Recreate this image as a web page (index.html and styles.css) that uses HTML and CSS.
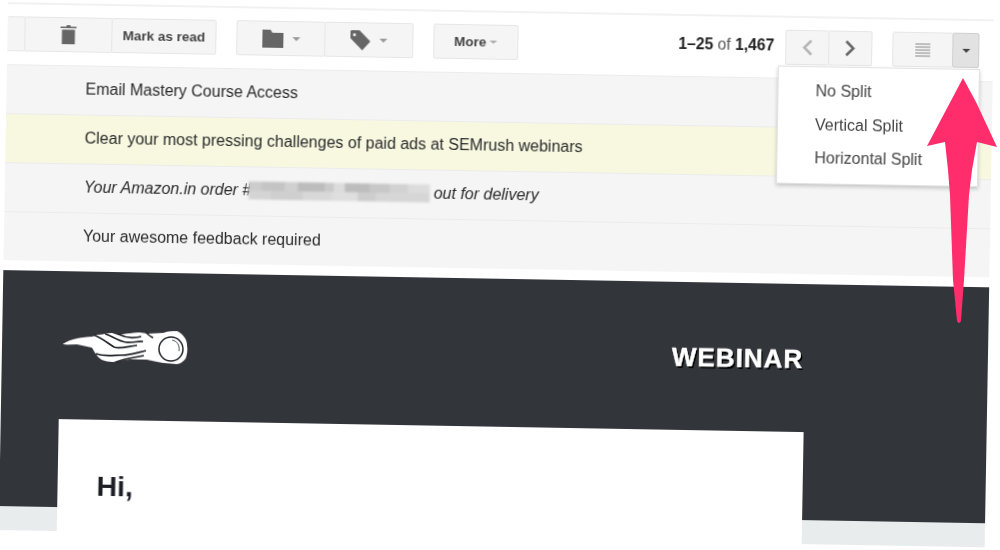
FILE: index.html
```html
<!DOCTYPE html>
<html lang="en">
<head>
<meta charset="utf-8">
<title>Inbox split view</title>
<link rel="stylesheet" href="styles.css">
</head>
<body>
<div class="stage">
  <div class="top-rule"></div>
  <div class="toolbar">
    <div class="group">
      <div class="btn btn-stub"></div>
      <div class="btn btn-trash">
        <svg class="icon" width="16" height="19" viewBox="0 0 16 19"><path d="M6 0h4v1.500h6V3H0V1.500h6z"/><path d="M1.500 4.500h13V19h-13z"/></svg>
      </div>
      <div class="btn btn-mark">Mark as read</div>
    </div>
    <div class="group">
      <div class="btn btn-drop">
        <svg class="icon" width="21" height="18" viewBox="0 0 21 18"><path d="M0 0h8l2 3h11v15H0z"/></svg>
        <span class="caret"></span>
      </div>
      <div class="btn btn-drop">
        <svg class="icon" width="20" height="20" viewBox="0 0 20 20"><path fill-rule="evenodd" d="M1 0h8l11 11-8 9L0 8V1.500A1.500 1.500 0 0 1 1 0zm3 3a1.500 1.500 0 1 0 0 3 1.500 1.500 0 0 0 0-3z"/></svg>
        <span class="caret"></span>
      </div>
    </div>
    <div class="btn btn-more">More<span class="caret caret-small"></span></div>
    <div class="count"><b>1–25</b> of <b>1,467</b></div>
    <div class="group">
      <div class="btn btn-page">
        <svg width="12" height="17" viewBox="0 0 12 17"><path class="chev-off" d="M10 1.500 3 8.500l7 7"/></svg>
      </div>
      <div class="btn btn-page">
        <svg width="12" height="17" viewBox="0 0 12 17"><path class="chev-on" d="m2 1.500 7 7-7 7"/></svg>
      </div>
    </div>
    <div class="group group-view">
      <div class="btn btn-list">
        <svg width="15" height="14" viewBox="0 0 15 14"><path class="list-lines" d="M0 1h15M0 4h15M0 7h15M0 10h15M0 13h15"/></svg>
      </div>
      <div class="btn btn-split"><span class="caret caret-dark"></span></div>
    </div>
  </div>

  <div class="menu">
    <div class="menu-item">No Split</div>
    <div class="menu-item">Vertical Split</div>
    <div class="menu-item">Horizontal Split</div>
  </div>

  <div class="rows">
    <div class="row">Email Mastery Course Access</div>
    <div class="row row-marked">Clear your most pressing challenges of paid ads at SEMrush webinars</div>
    <div class="row row-italic">Your Amazon.in order #<span class="mosaic"></span> out for delivery</div>
    <div class="row">Your awesome feedback required</div>
  </div>

  <div class="hero">
    <div class="hero-head">
      <svg class="logo" width="130" height="40" viewBox="60 328 130 40">
        <path class="logo-fill" d="M62.500 345C67 342 72 340 77 339C82 338 87 337 92 337L97 335C102 335 107 333 112 333L118 335C122 334 126 333 130 333C134 332 137 332 140 332L148 333C153 333 158 332 163 332C168 330 173 330 177 330C183 333 187 338 187 344C188 349 187 353 186 357C184 360 180 363 177 363C172 363 168 362 163 362C157 361 152 360 147 359C141 359 135 359 130 359C124 360 119 361 113 362C109 362 105 361 102 360C99 358 97 356 95 353L92 348C87 347 82 346 77 345C72 345 67 346 62.500 345z"/>
        <path class="logo-line" d="M93 335C102 338 107 343 114 347C120 349 128 346 137 345M105 334C112 336 118 341 126 342C132 343 138 340 143 341M118 334C126 338 134 338 141 336M145 331C148 334 150 336 153 337M96 354C106 357 114 355 122 355C130 355 138 352 146 350M116 362C126 358 136 357 144 355"/>
        <circle class="logo-ring" cx="171" cy="348" r="12"/>
        <path class="logo-shine" d="M172 339C177 340 180 344 179 350"/>
      </svg>
      <div class="hero-title">WEBINAR</div>
    </div>
    <div class="card"><div class="greeting">Hi,</div></div>
  </div>
</div>

<svg class="arrow" width="80" height="260" viewBox="920 70 80 260">
  <path d="M963 78 976 102 997 147 977 142 972 170 969 195 964 280 961 321Q959 325 957 321L953 280 950 195 948 170 945 142 927 146 945 112z"/>
</svg>
</body>
</html>
```

FILE: styles.css
```css
* { box-sizing: border-box; }

html, body {
  margin: 0;
  height: 100%;
  background: #fff;
  overflow: hidden;
}

body {
  position: relative;
  font-family: "Liberation Sans", Arial, sans-serif;
  color: #333;
}

.stage {
  position: relative;
  width: 994px;
  padding-left: 8px;
  transform: rotate(1deg);
  transform-origin: 0 0;
  filter: blur(0.3px);
}

.top-rule {
  height: 2px;
  margin-top: 2px;
  background: #f1f1f1;
}

.toolbar {
  display: flex;
  align-items: center;
  height: 60px;
  padding: 12px 14px 13px 0;
}

.group {
  display: flex;
  margin-right: 20px;
}

.btn {
  display: flex;
  align-items: center;
  justify-content: center;
  height: 35px;
  background: #f5f5f5;
  border: 1px solid #e6e6e6;
  border-radius: 2px;
  font-size: 13.500px;
  font-weight: 700;
  color: #444;
}

.group .btn + .btn { margin-left: -1px; }

.btn-stub { width: 18px; border-left: 0; }
.btn-trash { width: 88px; }
.btn-mark { width: 105px; }
.btn-drop { width: 89px; gap: 9px; }
.btn-more { width: 85px; }
.btn-page { width: 44px; }
.btn-list { width: 61px; }
.btn-split {
  width: 27px;
  background: #e2e2e2;
  border-color: #cfcfcf;
}

.icon { fill: #666; }

.caret {
  width: 0;
  height: 0;
  border-style: solid;
  border-width: 4px 4px 0;
  border-color: #999 transparent transparent;
}

.caret-small {
  margin-left: 3px;
  border-width: 3px 4px 0;
  border-color: #aaa transparent transparent;
}

.caret-dark { border-color: #444 transparent transparent; }

.chev-off, .chev-on {
  fill: none;
  stroke-width: 2.500;
}
.chev-off { stroke: #b5b5b5; }
.chev-on { stroke: #666; }

.list-lines {
  fill: none;
  stroke: #888;
  stroke-width: 1.200;
}

.count {
  margin-left: auto;
  margin-right: 11px;
  padding-bottom: 4px;
  font-size: 15.700px;
  color: #555;
}
.count b { color: #222; }

.group-view { margin-right: 0; }

.menu {
  position: absolute;
  left: 779px;
  top: 50px;
  z-index: 2;
  width: 202px;
  height: 118px;
  padding-top: 7px;
  background: #fff;
  border: 1px solid #e2e2e2;
  box-shadow: 0 2px 4px rgba(0, 0, 0, 0.2);
}

.menu-item {
  height: 33.500px;
  padding-left: 37px;
  font-size: 16px;
  line-height: 33px;
  color: #444;
}

.rows { height: 196px; }

.row {
  display: flex;
  align-items: center;
  height: 49px;
  padding-left: 79px;
  padding-bottom: 3px;
  background: #f5f5f5;
  border-top: 1px solid #ececec;
  font-size: 16px;
  color: #2a2a2a;
  white-space: pre;
}

.row-marked { background: #f8f8e1; }
.row-italic { font-style: italic; }

.mosaic {
  display: block;
  width: 181px;
  height: 18px;
  margin-left: -3px;
  background-image:
    linear-gradient(90deg, #ccc 0 7%, #c4c4c4 7% 20%, #d0d0d0 20% 27%, #bcbcbc 27% 42%, #cacaca 42% 47%, #dcdcdc 47% 53%, #bdbdbd 53% 67%, #c8c8c8 67% 78%, #d2d2d2 78% 88%, #dcdcdc 88% 100%),
    linear-gradient(90deg, #d4d4d4 0 12%, #cfcfcf 12% 30%, #d8d8d8 30% 46%, #dedede 46% 60%, #cdcdcd 60% 70%, #d6d6d6 70% 100%);
  background-size: 100% 50%;
  background-position: 0 0, 0 100%;
  background-repeat: no-repeat;
  filter: blur(0.8px);
}

.hero {
  height: 262px;
  margin-top: 10px;
  background-image: linear-gradient(#32353a 0 236px, #e8eced 236px 260px, #fff 260px);
}

.hero-head {
  display: flex;
  align-items: center;
  height: 148px;
  padding-left: 58px;
}

.logo { margin-top: 4px; }
.logo-fill { fill: #fff; }
.logo-line, .logo-ring, .logo-shine {
  fill: none;
  stroke: #23252a;
}
.logo-line { stroke-width: 1.700; }
.logo-ring { stroke-width: 1.500; }
.logo-shine { stroke-width: 0.800; }

.hero-title {
  margin-left: 482px;
  margin-top: 2px;
  font-size: 26px;
  font-weight: 700;
  letter-spacing: 1px;
  color: #fff;
  -webkit-text-stroke: 0.5px #fff;
  text-shadow: 1.5px 1.5px 0 #000;
}

.card {
  width: 745px;
  height: 114px;
  margin-left: 58px;
  padding: 50px 0 0 39px;
  background: #fff;
}

.greeting {
  font-size: 28.500px;
  font-weight: 700;
  line-height: 32px;
  color: #1d1f24;
}

.arrow {
  position: absolute;
  left: 920px;
  top: 70px;
}
.arrow path { fill: #ff2d6c; }
```
